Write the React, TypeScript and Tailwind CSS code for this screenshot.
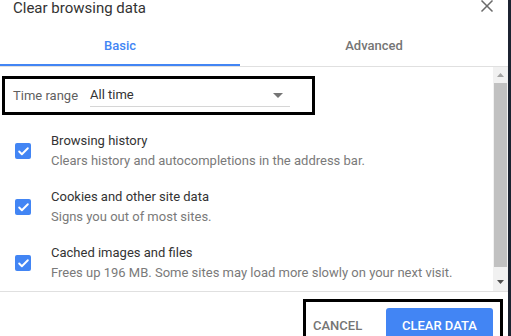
import { Check } from 'lucide-react'

const ITEMS = [
  { title: 'Browsing history', desc: 'Clears history and autocompletions in the address bar.' },
  { title: 'Cookies and other site data', desc: 'Signs you out of most sites.' },
  { title: 'Cached images and files', desc: 'Frees up 196 MB. Some sites may load more slowly on your next visit.' },
]

export default function App() {
  return (
    <div className="w-[511px] h-[336px] overflow-hidden bg-white flex font-['Roboto',sans-serif]">
      <div className="w-[508px] flex flex-col">
        {/* header */}
        <div className="relative h-[30px] shrink-0">
          <h1 className="pl-[13px] text-[15px] leading-[17px] text-[#333333]">Clear browsing data</h1>
          <svg className="absolute left-[480px] top-[-1px]" width="14" height="14" viewBox="0 0 14 14">
            <path d="M1.5 1.5 L12.5 12.5 M12.5 1.5 L1.5 12.5" stroke="#6b6b6b" strokeWidth="1.5" />
          </svg>
        </div>

        {/* tabs */}
        <div className="flex h-[36px] shrink-0">
          <div className="w-[240px] border-b-2 border-[#4285f4] text-center pt-[8px] text-[13px] leading-[15px] font-medium text-[#4285f4]">
            Basic
          </div>
          <div className="flex-1 text-center pt-[8px] text-[13px] leading-[15px] font-medium text-[#757575]">
            Advanced
          </div>
        </div>
        <div className="h-px bg-[#e0e0e0] shrink-0" />

        {/* body */}
        <div className="flex h-[224px] shrink-0">
          <div className="flex-1 overflow-hidden">
            <div className="mt-[9px] ml-[2px] w-[313px] h-[39px] border-[3px] border-black flex items-center">
              <span className="pl-[8px] w-[85px] text-[13px] text-[#5f5f5f]">Time range</span>
              <div className="w-[200px] h-[23px] flex items-center justify-between border-b border-[#d6d6d6]">
                <span className="text-[13px] text-[#333333]">All time</span>
                <svg className="mr-[7px]" width="10" height="5" viewBox="0 0 10 5">
                  <path d="M0 0 L10 0 L5 5 Z" fill="#757575" />
                </svg>
              </div>
            </div>

            <div className="mt-[8px]">
              {ITEMS.map((it) => (
                <div key={it.title} className="h-[56px] flex items-center">
                  <div className="ml-[15px] w-4 h-4 rounded-[2px] bg-[#4285f4] flex items-center justify-center shrink-0">
                    <Check size={13} strokeWidth={3.5} className="text-white" />
                  </div>
                  <div className="ml-[20px] text-[13px] leading-[20px]">
                    <p className="text-[#333333]">{it.title}</p>
                    <p className="text-[#7a7a7a]">{it.desc}</p>
                  </div>
                </div>
              ))}
            </div>
          </div>

          {/* scrollbar */}
          <div className="w-[15px] bg-[#f1f1f1] flex flex-col items-center">
            <div className="h-[16px] flex items-center justify-center">
              <svg width="7" height="4" viewBox="0 0 7 4">
                <path d="M0 4 L7 4 L3.5 0 Z" fill="#a3a3a3" />
              </svg>
            </div>
            <div className="w-[13px] h-[184px] bg-[#c1c1c1]" />
            <div className="flex-1 flex items-end justify-center pb-[7px]">
              <svg width="7" height="4" viewBox="0 0 7 4">
                <path d="M0 0 L7 0 L3.5 4 Z" fill="#505050" />
              </svg>
            </div>
          </div>
        </div>
        <div className="h-px bg-[#e0e0e0] shrink-0" />

        {/* footer */}
        <div className="mt-[7px] ml-[303px] w-[200px] h-[45px] border-[3px] border-black shrink-0">
          <div className="mt-[6px] flex">
            <div className="w-[80px] h-[36px] pl-[7px] flex items-center text-[13px] font-medium text-[#757575]">CANCEL</div>
            <div className="w-[107px] h-[36px] rounded-[3px] bg-[#4285f4] flex items-center justify-center text-[13px] font-medium text-white">
              CLEAR DATA
            </div>
          </div>
        </div>
      </div>
      <div className="w-[3px] bg-[#1c2331]" />
    </div>
  )
}
